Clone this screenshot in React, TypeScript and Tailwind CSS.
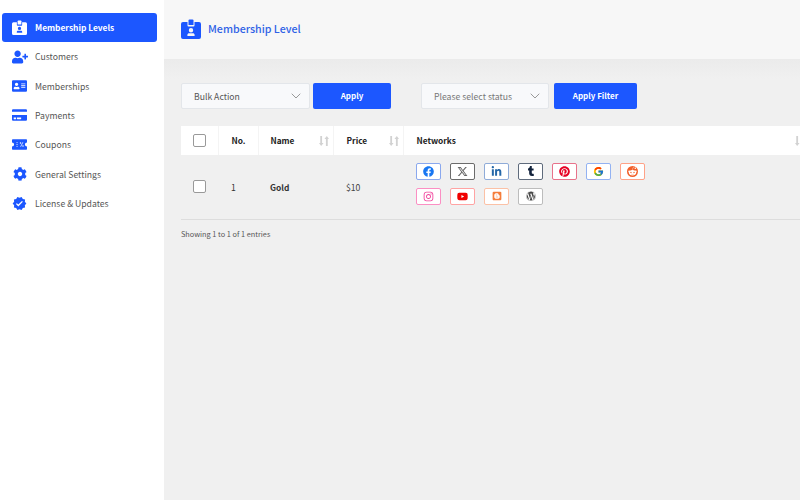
import { FaAddressCard, FaCreditCard, FaUserPlus, FaCog, FaFacebook, FaLinkedinIn, FaTumblr, FaPinterest, FaInstagram, FaYoutube, FaBlogger, FaWordpress, FaRedditAlien } from 'react-icons/fa'
import { FaXTwitter } from 'react-icons/fa6'
import { FcGoogle } from 'react-icons/fc'
import { MdVerified } from 'react-icons/md'
import { LuChevronDown } from 'react-icons/lu'

function BadgeIcon({ className }: { className: string }) {
  return (
    <svg viewBox="0 0 20 20" className={className} fill="currentColor">
      <path d="M7.5 1.500A1 1 0 0 1 8.500.5h3a1 1 0 0 1 1 1V6h-5z" />
      <path fillRule="evenodd" d="M2 3h4.500v3.500a1 1 0 0 0 1 1h5a1 1 0 0 0 1-1V3H18a2 2 0 0 1 2 2v13a2 2 0 0 1-2 2H2a2 2 0 0 1-2-2V5a2 2 0 0 1 2-2zm8 6a2.200 2.200 0 1 0 0 4.400A2.200 2.200 0 0 0 10 9zm-3.600 8h7.200v-1.200c0-.9-.8-1.500-1.700-1.500H8.100c-.9 0-1.700.6-1.700 1.500z" />
    </svg>
  )
}

function CouponIcon({ className }: { className: string }) {
  return (
    <svg viewBox="0 0 20 14" className={className}>
      <path fill="currentColor" d="M1 0h18a1 1 0 0 1 1 1v3.200a2.800 2.800 0 0 0 0 5.600V13a1 1 0 0 1-1 1H1a1 1 0 0 1-1-1V9.800a2.800 2.800 0 0 0 0-5.600V1a1 1 0 0 1 1-1z" />
      <path stroke="#fff" strokeWidth="1" d="M6 4.500h1.500M6 7h1.500M6 9.500h1.500M14.500 4l-3 6" />
      <circle cx="11.300" cy="5" r="1" fill="#fff" />
      <circle cx="14.700" cy="9" r="1" fill="#fff" />
    </svg>
  )
}

function SortIcon({ className }: { className: string }) {
  return (
    <svg viewBox="0 0 12 12" className={className} fill="#d2d2d2">
      <path d="M1.500 0h2.200v8.500H5.500L2.600 12 0 8.500h1.500zM8.300 12h2.200V3.500H12L9.400 0 6.500 3.500h1.800z" />
    </svg>
  )
}

const navItems = [
  { label: 'Customers', icon: <FaUserPlus className="w-[16px] h-[14px]" /> },
  { label: 'Memberships', icon: <FaAddressCard className="w-[15px] h-[14px]" /> },
  { label: 'Payments', icon: <FaCreditCard className="w-[15px] h-[14px]" /> },
  { label: 'Coupons', icon: <CouponIcon className="w-[15px] h-[11px]" /> },
  { label: 'General Settings', icon: <FaCog className="w-[14px] h-[14px] ml-px" /> },
  { label: 'License & Updates', icon: <MdVerified className="w-[15px] h-[15px]" /> },
]

const networksRowOne = [
  { border: 'border-[#8aa8ee]', icon: <FaFacebook className="text-[11px] text-[#1877f2]" /> },
  { border: 'border-[#6b6b6b]', icon: <FaXTwitter className="text-[11px] text-[#666666]" /> },
  { border: 'border-[#8fabd8]', icon: <FaLinkedinIn className="text-[11px] text-[#2467a8]" /> },
  { border: 'border-[#5f6b7c]', icon: <FaTumblr className="text-[10px] text-[#13233c]" /> },
  { border: 'border-[#e8728a]', icon: <FaPinterest className="text-[11px] text-[#e60023]" /> },
  { border: 'border-[#93b2f2]', icon: <FcGoogle className="text-[11px]" /> },
  { border: 'border-[#ffa287]', icon: <span className="w-[11px] h-[11px] rounded-full bg-[#f2602a] flex items-center justify-center"><FaRedditAlien className="text-[9px] text-white" /></span> },
]

const networksRowTwo = [
  { border: 'border-[#fb8fc3]', icon: <FaInstagram className="text-[11px] text-[#f0409a]" /> },
  { border: 'border-[#ffa3a3]', icon: <FaYoutube className="text-[11px] text-[#f00000]" /> },
  { border: 'border-[#fbc1a6]', icon: <FaBlogger className="text-[10px] text-[#f57d3b]" /> },
  { border: 'border-[#bcbcbc]', icon: <FaWordpress className="text-[10px] text-[#464646]" /> },
]

function SelectBox({ label, className }: { label: string; className: string }) {
  return (
    <div className={`h-[26px] flex items-center justify-between pl-[12px] pr-[5px] bg-[#f8f9fb] border border-[#e3e6ea] rounded-[2px] text-[8.67px] ${className}`}>
      <span>{label}</span>
      <LuChevronDown className="w-[16px] h-[16px] text-[#999999] stroke-[1.5]" />
    </div>
  )
}

export default function App() {
  return (
    <div className="w-[800px] h-[500px] flex overflow-hidden bg-[#f0f0f0] text-[#333333] font-['Noto_Sans_CJK_JP',sans-serif]">
      <aside className="w-[164px] shrink-0 bg-white pt-[13px] pl-[2px] pr-[7px] text-[8.67px] text-[#555555]">
        <div className="h-[29px] flex items-center gap-[8px] pl-[10px] bg-[#1c57ff] rounded-[3px] text-white font-semibold text-[8.4px]">
          <BadgeIcon className="w-[15px] h-[15px]" />
          Membership Levels
        </div>
        {navItems.map((item) => (
          <div key={item.label} className="h-[29.4px] flex items-center">
            <div className="w-[33px] pl-[10px] shrink-0 flex text-[#1c57ff]">{item.icon}</div>
            {item.label}
          </div>
        ))}
      </aside>

      <main className="flex-1 min-w-0">
        <header className="h-[59px] flex items-center gap-[7px] pl-[17px] pb-[1px] bg-[#f7f7f7]">
          <BadgeIcon className="w-[20px] h-[20px] text-[#1c57ff]" />
          <h1 className="text-[10.67px] font-medium text-[#2f62e6]">Membership Level</h1>
        </header>

        <div className="pt-[24px] pl-[17px] bg-gradient-to-b from-[#ebebeb] to-[#f0f0f0] to-[20px]">
          <div className="flex">
            <SelectBox label="Bulk Action" className="w-[129px] text-[#555555]" />
            <button className="w-[78px] h-[26px] ml-[3px] bg-[#1c57ff] rounded-[2px] text-white text-[8px] font-semibold">Apply</button>
            <SelectBox label="Please select status" className="w-[128px] ml-[30px] text-[#777777]" />
            <button className="w-[83px] h-[26px] ml-[5px] bg-[#1c57ff] rounded-[2px] text-white text-[8px] font-semibold">Apply Filter</button>
          </div>

          <table className="mt-[17px] w-[625px] max-w-none table-fixed border-collapse text-[8.67px]">
            <colgroup>
              <col className="w-[37px]" />
              <col className="w-[40px]" />
              <col className="w-[75px]" />
              <col className="w-[70px]" />
              <col />
            </colgroup>
            <thead>
              <tr className="h-[29px] bg-white text-[#222222] text-left text-[8.3px]">
                <th className="font-semibold border-r border-[#f4f4f4]">
                  <input type="checkbox" className="appearance-none block w-[13px] h-[13px] ml-[12px] bg-white border border-[#999999] rounded-[2px]" />
                </th>
                <th className="pl-[13px] font-semibold border-r border-[#f4f4f4]">No.</th>
                <th className="pl-[12px] font-semibold border-r border-[#f4f4f4]">
                  <div className="flex items-center justify-between pr-[4px]">Name<SortIcon className="w-[10px] h-[12px]" /></div>
                </th>
                <th className="pl-[13px] font-semibold border-r border-[#f4f4f4]">
                  <div className="flex items-center justify-between pr-[4px]">Price<SortIcon className="w-[10px] h-[12px]" /></div>
                </th>
                <th className="pl-[13px] font-semibold">
                  <div className="flex items-center justify-between pr-[1px]">Networks<SortIcon className="w-[10px] h-[12px]" /></div>
                </th>
              </tr>
            </thead>
            <tbody>
              <tr className="h-[64px] border-b border-[#dddddd]">
                <td>
                  <input type="checkbox" className="appearance-none block w-[13px] h-[13px] ml-[12px] bg-white border border-[#999999] rounded-[2px]" />
                </td>
                <td className="pl-[13px] pt-[1px]">1</td>
                <td className="pl-[12px] pt-[1px] font-semibold text-[#333333] text-[8.4px]">Gold</td>
                <td className="pl-[13px] pt-[1px] text-[#444444]">$10</td>
                <td className="pl-[13px] pb-[6px]">
                  <div className="flex flex-col gap-[8px]">
                    <div className="flex gap-[9px]">
                      {networksRowOne.map((n, i) => (
                        <span key={i} className={`w-[25px] h-[17px] flex items-center justify-center bg-white border rounded-[2px] ${n.border}`}>{n.icon}</span>
                      ))}
                    </div>
                    <div className="flex gap-[9px]">
                      {networksRowTwo.map((n, i) => (
                        <span key={i} className={`w-[25px] h-[17px] flex items-center justify-center bg-white border rounded-[2px] ${n.border}`}>{n.icon}</span>
                      ))}
                    </div>
                  </div>
                </td>
              </tr>
            </tbody>
          </table>

          <p className="mt-[8px] text-[7.33px] text-[#555555]">Showing 1 to 1 of 1 entries</p>
        </div>
      </main>
    </div>
  )
}
